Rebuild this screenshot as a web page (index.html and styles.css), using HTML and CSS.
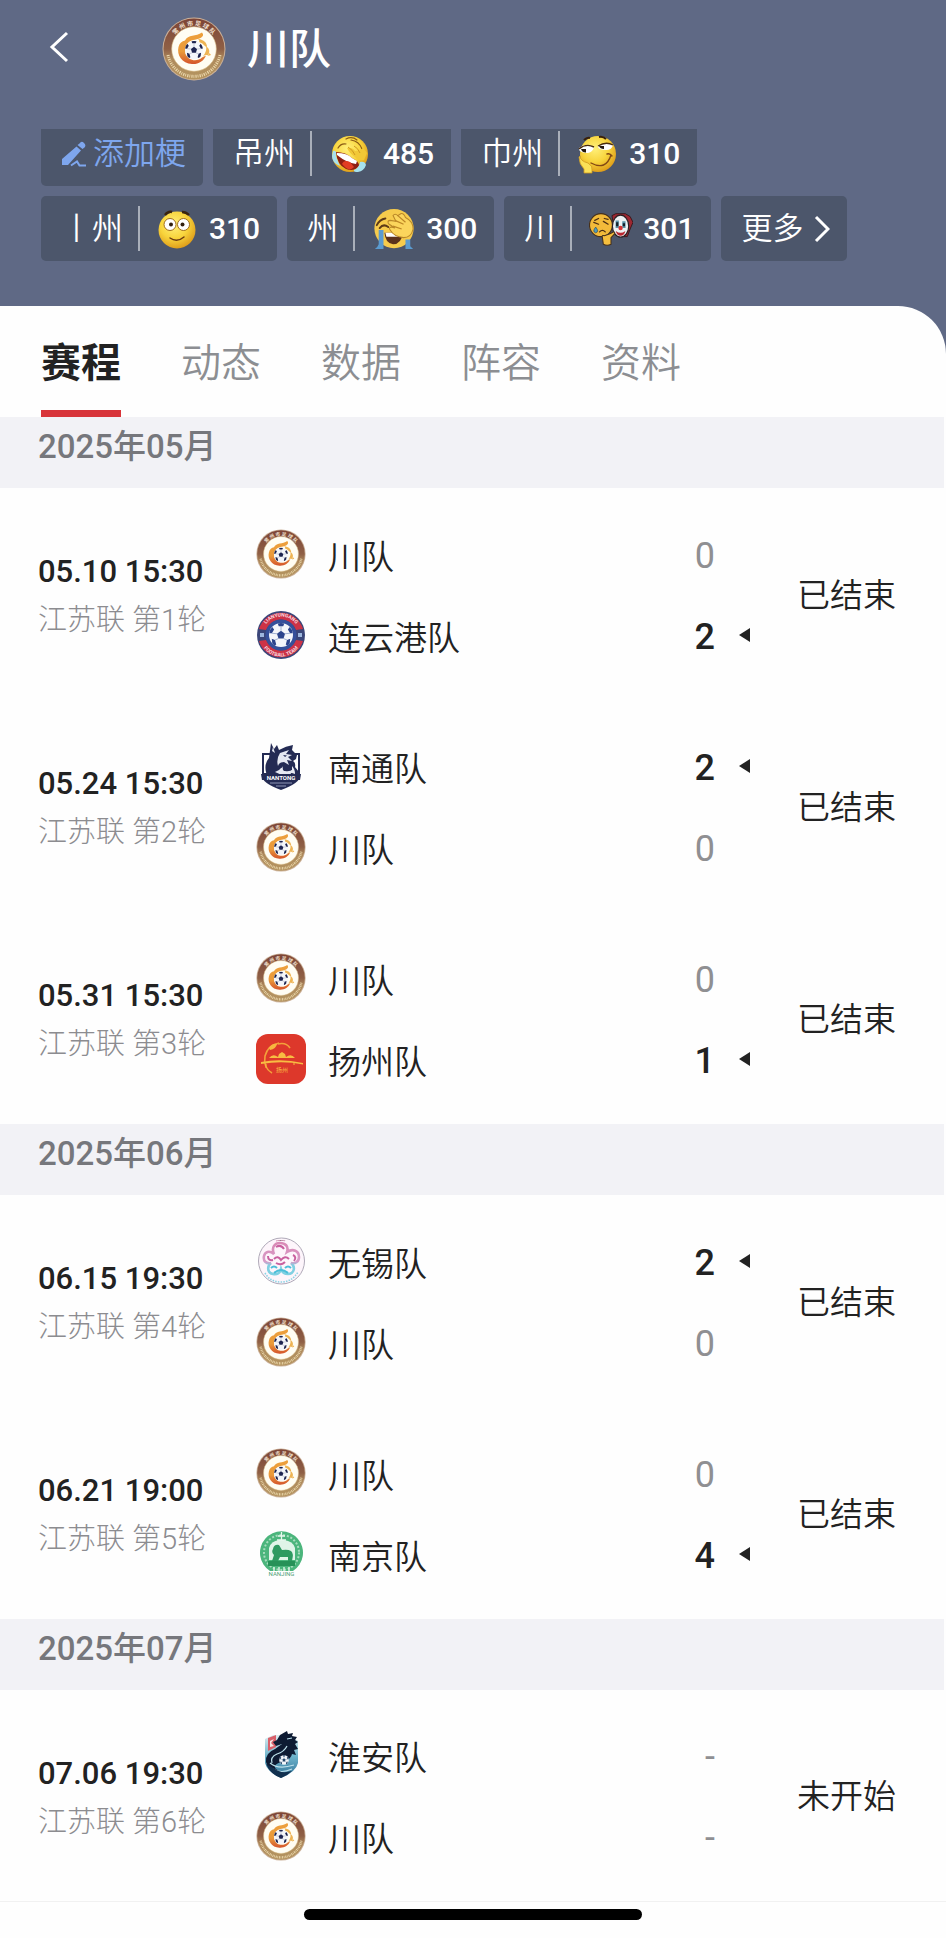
FILE: index.html
```html
<!DOCTYPE html>
<html lang="zh-CN">
<head>
<meta charset="utf-8">
<meta name="viewport" content="width=device-width, initial-scale=1">
<title>川队 赛程</title>
<link rel="stylesheet" href="styles.css">
</head>
<body>
<svg class="defs" aria-hidden="true">
  <defs>
    <linearGradient id="ring" x1="0" y1="0" x2="0" y2="1">
      <stop offset="0" stop-color="#7d4436"/><stop offset=".5" stop-color="#8f6046"/><stop offset=".66" stop-color="#ae8a5c"/><stop offset="1" stop-color="#b59560"/>
    </linearGradient>
    <linearGradient id="flame" x1="0" y1="0" x2="0" y2="1">
      <stop offset="0" stop-color="#eda03c"/><stop offset=".6" stop-color="#ea9a3a"/><stop offset="1" stop-color="#d4542b"/>
    </linearGradient>
    <radialGradient id="face" cx=".42" cy=".35" r=".68">
      <stop offset="0" stop-color="#fff07a"/><stop offset=".55" stop-color="#f8d43c"/><stop offset="1" stop-color="#dd9a18"/>
    </radialGradient>
    <linearGradient id="wuxi" x1="0" y1="0" x2="0" y2="1">
      <stop offset="0" stop-color="#d98ab6"/><stop offset=".6" stop-color="#d79cc8"/><stop offset=".72" stop-color="#7fd0e2"/><stop offset="1" stop-color="#7fd0e2"/>
    </linearGradient>
    <linearGradient id="huai" x1="0" y1="0" x2="0" y2="1">
      <stop offset="0" stop-color="#dfeef2"/><stop offset=".5" stop-color="#6db3cb"/><stop offset="1" stop-color="#2f7096"/>
    </linearGradient>
    <path id="arc-top" d="M8.500 32a23.500 23.500 0 0 1 47 0"/>
    <path id="lyg-top" d="M6.500 25a18.500 18.500 0 0 1 37 0"/>
    <path id="lyg-bottom" d="M3.500 25a21.500 21.500 0 0 0 43 0"/>
  </defs>
  <symbol id="ball" viewBox="0 0 20 20">
    <circle cx="10" cy="10" r="9.600" fill="#f4f6fa"/>
    <path d="M10 6.600l3.200 2.400-1.200 3.800H8L6.800 9z"/>
    <path d="M7.400.8Q10 0 12.600.8L11.800 3H8.200zM.6 8.500Q1.200 5 3 3.500l1.500 2L2.700 8.600zM19.400 8.500Q18.800 5 17 3.500l-1.500 2 1.800 3.100zM3 16.500L2.600 13l2.600 1 1 3.600-1.200.7Q4 17.700 3 16.500zM17 16.500l.4-3.500-2.600 1-1 3.600 1.200.7q1-.6 2-1.800z"/>
    <path d="M10 3v3.600M2.700 8.600l4.100.4M17.300 8.600l-4.100.4M8 12.800L5.200 14M12 12.800l2.800 1.200" fill="none" stroke="currentColor" stroke-width=".5"/>
  </symbol>
  <symbol id="crest-chuan" viewBox="0 0 64 64">
    <circle cx="32" cy="32" r="31.500" fill="#cbb199"/>
    <circle cx="32" cy="32" r="30.500" fill="url(#ring)"/>
    <circle cx="32" cy="32" r="22.300" fill="#fffdf3" stroke="#dcc08c" stroke-width=".6"/>
    <text class="crest-cn"><textPath href="#arc-top" startOffset="50%">常 州 市 足 球 队</textPath></text>
    <path d="M6 38a26.500 26.500 0 0 0 52 0" fill="none" stroke="#ecd9ae" stroke-width="3" stroke-dasharray="1.200 1 .8 1.200"/>
    <path d="M23 23.500C26 17 34 20 40 15.500c2 2.500 1 4-1.500 5.500-5 2.500-10 1-13.500 6-3 5-2.500 11 2 14.500 4.500 3 10 2 13-1l4-2c-2.500 6-8 9-14 8.500C20 46.500 14.500 38 16.500 30c1-4 3.500-6 6.500-6.500z" fill="url(#flame)"/>
    <path d="M36 22c6 .5 9 4 9 8-3-.5-3-3.500-8-5 1-1 0-2-1-3zM44 29c4 3 4 6 2 9.500-2-1-4 0-5 1 2-3 4-6 3-10.500zM47.500 36l1.500 2-3 1z" fill="#eeb453"/>
    <use href="#ball" x="22.500" y="23.500" width="19" height="19" fill="#1d2450" color="#8b93ad"/>
  </symbol>
  <symbol id="emo-lol" viewBox="0 0 40 40">
    <circle cx="20" cy="20" r="18" fill="url(#face)"/>
    <path d="M8 14q3-5 8-4M16 5q6-3 11 1M21 6q8 1 11 9" fill="none" stroke="#8a5a14" stroke-width="1.200" stroke-linecap="round"/>
    <path d="M17 14q5-1 8 3 5 0 8-3l4 5-3 7q-6 1-9-3-5-3-8-9z" fill="#f2c836"/>
    <path d="M18 13q5 3 7 8M24 12q4 2 6 7" fill="none" stroke="#cf9820" stroke-width="1"/>
    <path d="M6 18q10 0 16 6 7 3 7 8-5 6-13 3Q7 31 6 18z" fill="#8e1f12"/>
    <path d="M7 19q10 0 15 5l5 3-1 3q-9-1-19-9z" fill="#fff"/>
    <path d="M12 30q2-5 8-2l4 5q-5 6-12-3z" fill="#e23c22"/>
    <path d="M3 17q4-1 3 5 2 6 4 10Q2 29 2 22zM30 28q5-1 6 3-2 6-8 7-5 0-4-2 5-2 6-8z" fill="#a6e1ee"/>
  </symbol>
  <symbol id="emo-smirk" viewBox="0 0 40 40">
    <circle cx="21" cy="20" r="18" fill="url(#face)"/>
    <path d="M2 14q7-6 15-1-1 5-6 6Q4 19 2 16zM21 12q8-5 15-1-1 5-7 5-7 0-8-3z" fill="#fff"/>
    <path d="M2 15q7-6 15-2M21 12q8-5 15-1" fill="none" stroke="#4a2c0c" stroke-width="1.400"/>
    <path d="M4 15h5v3.500q-4 0-5-3.500zM22 12h5v3q-4 0-5-3z" fill="#24180d"/>
    <path d="M7 6q3-3 6-2M22 3q4-1 7 2" fill="none" stroke="#38200c" stroke-width="2"/>
    <path d="M14 29q15 8 20-8M30 20q3-1 5 2" fill="none" stroke="#824814" stroke-width="1.400" stroke-linecap="round"/>
    <path d="M3 22q0 5 8 7 5 3 4 7v3H7v-4q-5-5-5-12z" fill="#fbe157" stroke="#cf9b1e" stroke-width=".8"/>
  </symbol>
  <symbol id="emo-wide" viewBox="0 0 40 40">
    <circle cx="20" cy="21" r="18.500" fill="url(#face)"/>
    <circle cx="13" cy="15.500" r="6" fill="#fff" stroke="#a06c1a"/><circle cx="26.500" cy="15.500" r="6" fill="#fff" stroke="#a06c1a"/>
    <circle cx="14" cy="15.500" r="2" fill="#32200e"/><circle cx="25.500" cy="15.500" r="2" fill="#32200e"/>
    <path d="M8 6q3-4 7-3M25 3q4 0 7 3" fill="none" stroke="#3a240e" stroke-width="2.400"/>
    <path d="M13 29q7 5 14-1" fill="none" stroke="#6b3b10" stroke-width="1.400" stroke-linecap="round"/>
  </symbol>
  <symbol id="emo-palm" viewBox="0 0 46 46">
    <circle cx="23" cy="22.500" r="20.500" fill="#f6cb4c"/>
    <path d="M5 19q3-6 9-7M8 22q4-5 9-1" fill="none" stroke="#5d3a17" stroke-width="2" stroke-linecap="round"/>
    <path d="M13 27h19q-1 12-10 12-8-1-9-12z" fill="#5b321c"/><path d="M14 27h17l-1 4H15z" fill="#fff"/>
    <path d="M7 24h5v20H3q3-2 4-5zM35 34h5v7l3 3h-8z" fill="#5a9bd0"/>
    <path d="M17 17q-1-3 2-3l6 1-3-6q2-3 5 0l3-2q3-1 5 4 8 4 8 12-2 9-10 9-10-1-14-8-2-2 1-3l4 1-6-4z" fill="#fbd55c" stroke="#b98728" stroke-width="1.100"/>
    <path d="M24 14l9 4M27 9l8 7M22 20l9 3" fill="none" stroke="#bd8625" stroke-width="1.300"/>
  </symbol>
  <symbol id="emo-mask" viewBox="0 0 46 36">
    <path d="M24 4l4-2 10 0 5 3 3 6-3 7-3 8-9 0-5-10z" fill="#9e2731" stroke="#35191c"/>
    <circle cx="12.500" cy="14" r="12" fill="#f2ba3a" stroke="#46301b" stroke-width="1.200"/>
    <ellipse cx="33" cy="15" rx="8.500" ry="11.500" fill="#eef1f2" stroke="#292023" stroke-width="1.200"/>
    <path d="M29.500 9v8M36.500 10v7" stroke="#5b93a8" stroke-width="3.400"/><path d="M29.500 11v4M36.500 12v3" stroke="#15222a" stroke-width="2.400"/>
    <circle cx="33" cy="17" r="2.300" fill="#d93434"/><path d="M28 20q5 4 10 0-1 5-5 5t-5-5z" fill="#b92730"/>
    <path d="M5 11l5 2M15 10l5 3M6 9l4-2M16 7l4 1M11 21q3-3 6 0" fill="none" stroke="#4a2d12" stroke-width="1.300" stroke-linecap="round"/>
    <path d="M7 16q-4 5 0 6 4-1 0-6z" fill="#4d9bbd" stroke="#284d60" stroke-width=".7"/>
    <path d="M14 27q-1-3 2-2l6-2 4-2q2 1 0 3l-3 3v7q-4 2-8 0z" fill="#f6bf3e" stroke="#46301b" stroke-width="1.100"/>
  </symbol>
</svg>

<div class="page">
  <header class="hero">
    <div class="titlebar">
      <button class="back" type="button" aria-label="返回">
        <svg class="back-icon" viewBox="0 0 20 32" aria-hidden="true"><path d="M18 2L3 16l15 14"/></svg>
      </button>
      <svg class="title-crest" aria-hidden="true"><use href="#crest-chuan"/></svg>
      <h1 class="title">川队</h1>
    </div>
    <div class="chips">
      <div class="chip-row chip-row-top">
        <button class="chip" type="button">
          <svg class="pen" viewBox="0 0 26 26" aria-hidden="true"><path d="M18.500 2.500q2-3 4.500-.500t.5 4.500l-2 1.500-5-4zM15.500 5.500l4.500 4L7 24H1v-6z"/><path class="pen-line" d="M10 24.500l6-4 2.500 4H25"/></svg>
          <span class="chip-add">添加梗</span>
        </button>
        <button class="chip" type="button"><span>吊州</span><i class="rule"></i><svg class="emoji emoji-spaced" aria-hidden="true"><use href="#emo-lol"/></svg><span class="count">485</span></button>
        <button class="chip" type="button"><span>巾州</span><i class="rule"></i><svg class="emoji" aria-hidden="true"><use href="#emo-smirk"/></svg><span class="count">310</span></button>
      </div>
      <div class="chip-row">
        <button class="chip" type="button"><span>丨州</span><i class="rule"></i><svg class="emoji" aria-hidden="true"><use href="#emo-wide"/></svg><span class="count">310</span></button>
        <button class="chip" type="button"><span>州</span><i class="rule"></i><svg class="emoji emoji-wide" aria-hidden="true"><use href="#emo-palm"/></svg><span class="count">300</span></button>
        <button class="chip" type="button"><span>川</span><i class="rule"></i><svg class="emoji emoji-wide" aria-hidden="true"><use href="#emo-mask"/></svg><span class="count">301</span></button>
        <button class="chip" type="button"><span>更多</span><svg class="more-icon" viewBox="0 0 16 28" aria-hidden="true"><path d="M2 2l12 12L2 26"/></svg></button>
      </div>
    </div>
  </header>

  <main class="panel">
    <nav class="tabs" aria-label="球队">
      <a class="tab tab-active" href="#schedule" aria-current="page">赛程</a>
      <a class="tab" href="#news">动态</a>
      <a class="tab" href="#stats">数据</a>
      <a class="tab" href="#squad">阵容</a>
      <a class="tab" href="#info">资料</a>
    </nav>

    <section id="schedule">
      <h2 class="month">2025年05月</h2>
      <article class="match">
        <div class="when"><time class="date" datetime="2025-05-10T15:30">05.10 15:30</time><span class="round">江苏联 第1轮</span></div>
        <div class="teams">
          <div class="team"><svg class="crest" aria-hidden="true"><use href="#crest-chuan"/></svg><span class="name">川队</span><span class="score">0</span></div>
          <div class="team win">
            <svg class="crest" viewBox="0 0 50 50" aria-hidden="true">
              <circle cx="25" cy="25" r="24" fill="#3a4679"/>
              <path d="M3 19a23 23 0 0 1 44 0l-7 1a16 16 0 0 0-30 0zM3 31a23 23 0 0 0 44 0l-7-1a16 16 0 0 1-30 0z" fill="#cd3346"/>
              <circle cx="25" cy="25" r="15.500" fill="#35509a"/>
              <path d="M4 23h4v4H4zM42 23h4v4h-4z" fill="#9db7dd"/>
              <text class="lyg-text"><textPath href="#lyg-top" startOffset="50%">LIANYUNGANG</textPath></text>
              <text class="lyg-text"><textPath href="#lyg-bottom" startOffset="50%">FOOTBALL TEAM</textPath></text>
              <use href="#ball" x="12.500" y="12.500" width="25" height="25" fill="#2c448c" color="#6f86b8"/>
            </svg>
            <span class="name">连云港队</span><span class="score">2</span>
          </div>
        </div>
        <span class="status">已结束</span>
      </article>
      <article class="match">
        <div class="when"><time class="date" datetime="2025-05-24T15:30">05.24 15:30</time><span class="round">江苏联 第2轮</span></div>
        <div class="teams">
          <div class="team win">
            <svg class="crest" viewBox="0 0 50 50" aria-hidden="true">
              <path d="M6 12h38v23q0 7-19 14Q6 42 6 35z" fill="#242b54"/>
              <path d="M8 14h7v18H8zM37 14h5v18h-5z" fill="#fff"/>
              <path d="M15 2l3 6 3-4 2 5q7-4 14-5l-1 5 5 5-1 4-3 2q3 2 2 6l4 5v5H11l-1-5q-2-8 3-14z" fill="#242b54"/>
              <path d="M24 12l9-3-3 4 6 1-4 2 4 4-5-1 2 5-5-3q-5 0-6 4-2-7 2-13zM19 31q5-2 8-6-1 5 2 5 5 1 8-2-1 7-9 7zM17 6l2 6-3-2zM36 25q3 3 3 8l-3-1z" fill="#e6e9f2"/>
              <path d="M27 14l4 .500-2 1.500zM23 25l5-3-2 5z" fill="#242b54"/>
              <path d="M5 33h40l-1 6H6z" fill="#242b54"/>
              <text class="nt-text" x="25" y="38.500">NANTONG</text>
              <path d="M14 42h22M20 45h10" stroke="#8f97b5" stroke-width="1"/>
            </svg>
            <span class="name">南通队</span><span class="score">2</span>
          </div>
          <div class="team"><svg class="crest" aria-hidden="true"><use href="#crest-chuan"/></svg><span class="name">川队</span><span class="score">0</span></div>
        </div>
        <span class="status">已结束</span>
      </article>
      <article class="match">
        <div class="when"><time class="date" datetime="2025-05-31T15:30">05.31 15:30</time><span class="round">江苏联 第3轮</span></div>
        <div class="teams">
          <div class="team"><svg class="crest" aria-hidden="true"><use href="#crest-chuan"/></svg><span class="name">川队</span><span class="score">0</span></div>
          <div class="team win">
            <svg class="crest" viewBox="0 0 50 50" aria-hidden="true">
              <rect width="50" height="50" rx="12" fill="#dd382b"/>
              <path d="M16 39Q7 34 9 22 12 11 23 9M22 10q8-2 12 4" fill="none" stroke="#f3a13a" stroke-width="1.600"/>
              <path d="M13 14q3-5 8-4-1 5-7 6z" fill="#f7b73e"/>
              <path d="M5 28q20-4 42 1v1.500q-20-4-42-.500zM13 24q4-5 9-1l1-3 3-2 3 2 1 3q5-4 9 1z" fill="#f8bd42"/>
              <path d="M10 30v4M38 29v2" stroke="#f8bd42"/>
              <text class="yz-text" x="26" y="37.500">扬州</text>
            </svg>
            <span class="name">扬州队</span><span class="score">1</span>
          </div>
        </div>
        <span class="status">已结束</span>
      </article>

      <h2 class="month">2025年06月</h2>
      <article class="match">
        <div class="when"><time class="date" datetime="2025-06-15T19:30">06.15 19:30</time><span class="round">江苏联 第4轮</span></div>
        <div class="teams">
          <div class="team win">
            <svg class="crest" viewBox="0 0 50 50" aria-hidden="true">
              <circle cx="25.500" cy="25" r="23" fill="#fdf5fb" stroke="#afa9b8" stroke-width="1"/>
              <path d="M18 18c-3-7 1-11 6-11s9 3 7 9c6-4 12-1 12 5 0 5-4 7-8 6 5 4 3 11-3 11-4 0-6-2-7-5-1 4-4 6-8 5-6-1-6-8-2-11-5 1-8-2-7-7 1-4 5-6 10-2z" fill="none" stroke="url(#wuxi)" stroke-width="2.600"/>
              <path d="M20 11q5-3 8 2M37 19q4 2 1 6M12 20q0 5 5 4M18 23q4-4 7 1 4-5 8-1M20 27q5 3 9-1" fill="none" stroke="#c9609f" stroke-width="2"/>
              <path d="M15 32q3-3 6 0M29 32q3-3 6 0M18 37q7-6 14 0" fill="none" stroke="#4bbdd8" stroke-width="2"/>
              <path d="M9 37q5 9 16 9t17-10" fill="none" stroke="#8bd4e4" stroke-width="1.600" stroke-dasharray="1.500 1.200"/>
              <path d="M20 5q5-1 10 0" stroke="#dc8bb5" stroke-dasharray="1.500 1"/>
            </svg>
            <span class="name">无锡队</span><span class="score">2</span>
          </div>
          <div class="team"><svg class="crest" aria-hidden="true"><use href="#crest-chuan"/></svg><span class="name">川队</span><span class="score">0</span></div>
        </div>
        <span class="status">已结束</span>
      </article>
      <article class="match">
        <div class="when"><time class="date" datetime="2025-06-21T19:00">06.21 19:00</time><span class="round">江苏联 第5轮</span></div>
        <div class="teams">
          <div class="team"><svg class="crest" aria-hidden="true"><use href="#crest-chuan"/></svg><span class="name">川队</span><span class="score">0</span></div>
          <div class="team win">
            <svg class="crest" viewBox="0 0 50 50" aria-hidden="true">
              <path d="M14 42a21.500 21.500 0 1 1 23 0z" fill="#4bb57c"/>
              <circle cx="25.500" cy="23.500" r="17.500" fill="none" stroke="#a7dcbd" stroke-width="2" stroke-dasharray="2 1.800"/>
              <path d="M13 31V19q2-7 10-8h5q9 1 11 8v12z" fill="#e0f4e8"/>
              <path d="M22 7h7M25.500 3v8M21 11h9" stroke="#e8f8ee" stroke-width="1.300"/>
              <path d="M17 20q1-5 6-4l3 5q6-1 9 1 3 2 1 10h-4v-4h-8l-2 4h-6l2-6q-3-3-1-6z" fill="#2e9a61"/>
              <path d="M12 32h27v5H12z" fill="#279158"/>
              <path d="M18 38v4M23 38v4M28 38v4M33 38v4" stroke="#d8f0e1" stroke-width="1.500"/>
              <text class="nj-text" x="25.500" y="47">NANJING</text>
            </svg>
            <span class="name">南京队</span><span class="score">4</span>
          </div>
        </div>
        <span class="status">已结束</span>
      </article>

      <h2 class="month">2025年07月</h2>
      <article class="match match-last">
        <div class="when"><time class="date" datetime="2025-07-06T19:30">07.06 19:30</time><span class="round">江苏联 第6轮</span></div>
        <div class="teams">
          <div class="team">
            <svg class="crest" viewBox="0 0 50 50" aria-hidden="true">
              <path d="M9 9l8-4h17l8 6v22q-2 9-17 15Q11 42 9 33z" fill="url(#huai)"/>
              <path d="M12 8l8-3v12l-8 4z" fill="#d9606a"/>
              <path d="M14 11l4-2-3 4 3 3-4 1z" fill="#f7e8e6"/>
              <path d="M31 1l1 3 5-1-1 3 5 1-2 3 3 2-3 2 3 5-4 1 2 5-4-1q-1 5-7 7-9 2-10 5-1 3 5 5l-2 2q-10-3-12-11-1-9 9-13l7-5-6 2-3-4 4-2 3-5z" fill="#0e1b33"/>
              <path d="M31 16q-3 6-10 8-7 3-5 9M36 8l-5 1M14 33q8 7 24 2M17 39q8 5 19 0" fill="none" stroke="#bce0eb" stroke-width="1.200"/>
              <path d="M10 34q4 10 15 14 7-3 11-7-11 3-17-2z" fill="#12304f"/>
              <use href="#ball" x="23" y="25" width="10" height="10" fill="#24466a" color="#24466a"/>
            </svg>
            <span class="name">淮安队</span><span class="score">-</span>
          </div>
          <div class="team"><svg class="crest" aria-hidden="true"><use href="#crest-chuan"/></svg><span class="name">川队</span><span class="score">-</span></div>
        </div>
        <span class="status">未开始</span>
      </article>
    </section>
    <div class="home-bar"></div>
  </main>
</div>
</body>
</html>
```
FILE: styles.css
```css
* { box-sizing: border-box; }

body {
  margin: 0;
  background: #fefefe;
  color: #222;
  font-family: Roboto, "Noto Sans CJK SC", sans-serif;
}

button {
  border: 0;
  padding: 0;
  background: none;
  color: inherit;
  font: inherit;
}

.defs { position: absolute; width: 0; height: 0; overflow: visible; }
.page { background: #5f6985; }

/* header */
.hero { padding: 16px 41px 45px; color: #fff; }
.titlebar { display: flex; align-items: center; height: 66px; }
.back { display: flex; width: 121px; padding: 0 0 4px 8px; }
.back-icon { width: 20px; height: 32px; fill: none; stroke: #fff; stroke-width: 3; }
.title-crest { width: 64px; height: 66px; }
.title { margin: 2px 0 0 21px; font-size: 42px; line-height: 60px; font-weight: 500; }

.chips { display: flex; flex-direction: column; gap: 10px; margin-top: 47px; }
.chip-row { display: flex; flex-wrap: wrap; gap: 10px; }
.chip {
  display: flex;
  align-items: center;
  height: 65px;
  padding: 0 17px 0 20px;
  border-radius: 5px;
  background: #4c566b;
  font-size: 31px;
  line-height: 40px;
  font-weight: 350;
  white-space: nowrap;
}
.chip-row-top .chip { height: 57px; padding-bottom: 8px; border-radius: 0 0 5px 5px; }
.chip-add { color: #7ea6ee; }
.pen { width: 26px; height: 26px; margin-right: 6px; fill: #7ea6ee; }
.pen-line { fill: none; stroke: #7ea6ee; stroke-width: 2; }
.rule { width: 2px; height: 45px; margin: 0 17px 0 15px; background: #a9afba; }
.emoji { width: 40px; height: 40px; margin-right: 12px; }
.emoji-spaced { width: 42px; }
.emoji-wide { width: 44px; height: 44px; margin-right: 10px; }
.count { font-size: 30px; font-weight: 500; }
.more-icon { width: 16px; height: 28px; margin-left: 11px; fill: none; stroke: #fff; stroke-width: 3; }

/* sheet */
.panel { padding-bottom: 18px; border-radius: 0 48px 0 0; background: #fefefe; }
.tabs { display: flex; gap: 60px; height: 111px; padding: 0 41px; }
.tab {
  display: flex;
  align-items: center;
  padding-top: 12px;
  border-bottom: 7px solid transparent;
  color: #8c8e92;
  font-size: 40px;
  line-height: 60px;
  font-weight: 350;
  text-decoration: none;
}
.tab-active { border-color: #d8343a; color: #222; font-weight: 700; }

.month {
  height: 71px;
  margin: 0 2px 0 0;
  padding: 7px 38px 0;
  background: #f2f2f6;
  color: #76777c;
  font-size: 33px;
  line-height: 46px;
  font-weight: 500;
}

.match {
  display: grid;
  grid-template-columns: 218px 1fr auto;
  align-items: center;
  height: 212px;
  padding: 0 50px 0 38px;
}
.match-last { border-bottom: 1px solid #f1f1f1; }
.when { display: flex; flex-direction: column; gap: 6px; padding-top: 6px; }
.date { font-size: 31px; line-height: 40px; font-weight: 500; }
.round { color: #8c8c90; font-size: 29px; line-height: 44px; font-weight: 300; }
.teams { display: flex; flex-direction: column; gap: 31px; padding-right: 47px; }
.team { display: flex; align-items: center; height: 50px; }
.crest { width: 50px; height: 50px; margin-right: 22px; }
.name { flex: 1; padding-top: 8px; font-size: 33px; line-height: 48px; font-weight: 350; }
.score { padding: 4px 35px 0 0; color: #8f8f92; font-size: 36px; line-height: 48px; }
.win .score { padding-right: 24px; color: #222; font-weight: 500; }
.win::after {
  content: "";
  border: solid transparent;
  border-width: 7px 11px 7px 0;
  border-right-color: #222;
}
.status { padding-top: 3px; font-size: 33px; line-height: 48px; font-weight: 350; }

.home-bar { width: 338px; height: 11px; margin: 7px auto 0; border-radius: 6px; background: #000; }

/* lettering on the crests */
.crest-cn, .lyg-text, .nt-text, .yz-text, .nj-text { text-anchor: middle; }
.crest-cn { fill: #f3e3d2; font-size: 6px; font-weight: 700; }
.lyg-text { fill: #f6dce0; font-size: 5px; font-weight: 700; }
.nt-text { fill: #fff; font-size: 6px; font-weight: 700; }
.yz-text { fill: #f8bd42; font-size: 6px; }
.nj-text { fill: #4ea077; font-size: 6px; }
```
